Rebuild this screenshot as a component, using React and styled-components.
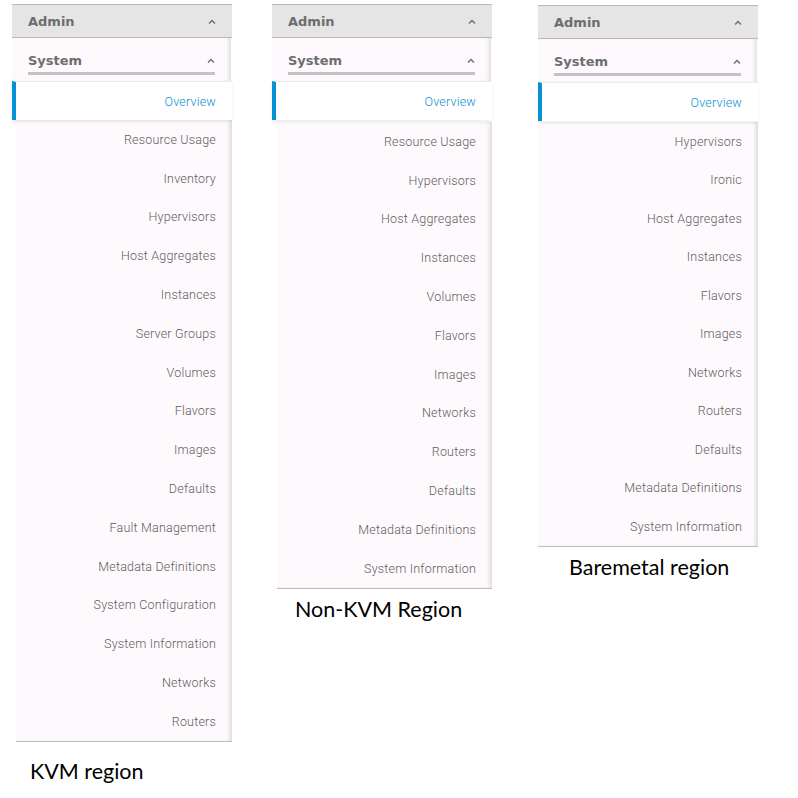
import React from 'react';
import styled, { createGlobalStyle } from 'styled-components';

const GlobalStyle = createGlobalStyle`
  html, body {
    margin: 0;
    padding: 0;
    background: #ffffff;
  }
`;

const regions = [
  {
    label: 'KVM region',
    left: 12,
    top: 4,
    listInset: 4,
    listTop: 0,
    rowHeight: 38.8,
    labelIndent: 14,
    labelGap: 16,
    items: [
      'Resource Usage',
      'Inventory',
      'Hypervisors',
      'Host Aggregates',
      'Instances',
      'Server Groups',
      'Volumes',
      'Flavors',
      'Images',
      'Defaults',
      'Fault Management',
      'Metadata Definitions',
      'System Configuration',
      'System Information',
      'Networks',
      'Routers',
    ],
  },
  {
    label: 'Non-KVM Region',
    left: 40,
    top: 4,
    listInset: 5,
    listTop: 2,
    rowHeight: 38.8,
    labelIndent: 18,
    labelGap: 7,
    items: [
      'Resource Usage',
      'Hypervisors',
      'Host Aggregates',
      'Instances',
      'Volumes',
      'Flavors',
      'Images',
      'Networks',
      'Routers',
      'Defaults',
      'Metadata Definitions',
      'System Information',
    ],
  },
  {
    label: 'Baremetal region',
    left: 46,
    top: 5,
    listInset: 0,
    listTop: 1,
    rowHeight: 38.5,
    labelIndent: 31,
    labelGap: 7,
    items: [
      'Hypervisors',
      'Ironic',
      'Host Aggregates',
      'Instances',
      'Flavors',
      'Images',
      'Networks',
      'Routers',
      'Defaults',
      'Metadata Definitions',
      'System Information',
    ],
  },
];

const Caret = () => (
  <svg width="8" height="5" viewBox="0 0 8 5">
    <path d="M1 4.5 L4 1.5 L7 4.5" fill="none" stroke="#6e6e6e" strokeWidth="1.4" />
  </svg>
);

const App = () => {
  return (
    <Page>
      <GlobalStyle />
      {regions.map((region) => (
        <Column key={region.label} $left={region.left} $top={region.top}>
          <AdminHeader>
            <HeaderText>Admin</HeaderText>
            <Caret />
          </AdminHeader>
          <SystemBlock>
            <SystemTitle>
              <HeaderText>System</HeaderText>
              <Caret />
            </SystemTitle>
          </SystemBlock>
          <ActiveItem>Overview</ActiveItem>
          <ItemList $inset={region.listInset} $top={region.listTop}>
            {region.items.map((item) => (
              <Item key={item} $height={region.rowHeight}>
                {item}
              </Item>
            ))}
          </ItemList>
          <RegionLabel
            $indent={region.labelIndent + region.listInset}
            $gap={region.labelGap}
          >
            {region.label}
          </RegionLabel>
        </Column>
      ))}
    </Page>
  );
};

const Page = styled.div`
  display: flex;
  align-items: flex-start;
  width: 798px;
  height: 798px;
  overflow: hidden;
`;

const Column = styled.div`
  display: flex;
  flex-direction: column;
  width: 220px;
  margin-left: ${({ $left }) => $left}px;
  margin-top: ${({ $top }) => $top}px;
`;

const AdminHeader = styled.div`
  display: flex;
  align-items: center;
  justify-content: space-between;
  height: 31px;
  padding: 1px 16px 0;
  box-sizing: content-box;
  background: #e5e5e5;
  border-top: 1px solid #b9b9b9;
  border-bottom: 1px solid #b9b9b9;
`;

const HeaderText = styled.span`
  font-family: 'DejaVu Sans', 'Liberation Sans', sans-serif;
  font-size: 13px;
  font-weight: bold;
  color: #6d6d6d;
`;

const SystemBlock = styled.div`
  height: 43px;
  padding: 0 16px 6px;
  background: #fdf9fd;
  margin-right: 1px;
  box-shadow: inset -4px 0 4px -2px rgba(0, 0, 0, 0.12);
  display: flex;
  align-items: flex-end;
  box-sizing: border-box;
`;

const SystemTitle = styled.div`
  flex: 1;
  display: flex;
  align-items: center;
  justify-content: space-between;
  height: 26px;
  padding-bottom: 1px;
  border-bottom: 3px solid #c5c1c5;
  box-sizing: border-box;
`;

const ActiveItem = styled.div`
  height: 38px;
  display: flex;
  align-items: center;
  justify-content: flex-end;
  padding-right: 16px;
  background: #ffffff;
  border-left: 4px solid #0591d4;
  border-top: 1px solid #ebebeb;
  box-shadow: 0 2px 3px rgba(0, 0, 0, 0.08);
  position: relative;
  z-index: 1;
  font-family: Roboto, 'Liberation Sans', sans-serif;
  font-size: 12.5px;
  font-weight: 300;
  letter-spacing: 0.2px;
  color: #0b93d4;
`;

const ItemList = styled.div`
  display: flex;
  flex-direction: column;
  margin-left: ${({ $inset }) => $inset}px;
  margin-top: ${({ $top }) => $top}px;
  background: #fdf9fd;
  border-bottom: 1px solid #bdbdbd;
  box-shadow: inset -4px 0 4px -2px rgba(0, 0, 0, 0.14);
`;

const Item = styled.div`
  height: ${({ $height }) => $height}px;
  display: flex;
  align-items: center;
  justify-content: flex-end;
  padding-right: 16px;
  font-family: Roboto, 'Liberation Sans', sans-serif;
  font-size: 12.5px;
  font-weight: 300;
  letter-spacing: 0.2px;
  color: #5e5e5e;
`;

const RegionLabel = styled.div`
  margin-top: ${({ $gap }) => $gap}px;
  padding-left: ${({ $indent }) => $indent}px;
  font-family: Lato, 'Open Sans', sans-serif;
  font-size: 21.5px;
  color: #000000;
`;

export default App;
